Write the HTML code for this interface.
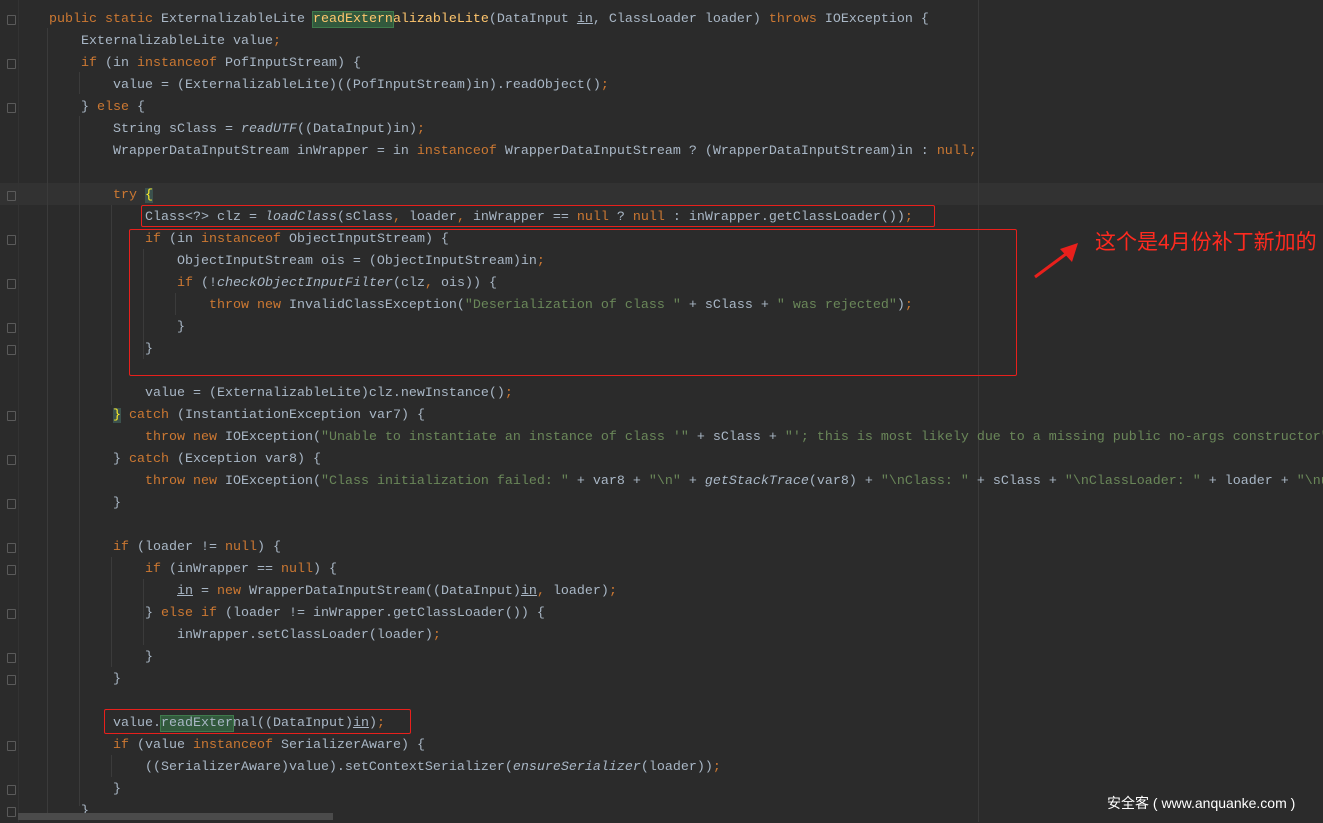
<!DOCTYPE html>
<html><head><meta charset="utf-8"><style>
body{margin:0;width:1323px;height:822px;background:#2b2b2b;overflow:hidden;position:relative;font-family:"Liberation Mono",monospace}
pre{position:absolute;left:49px;top:9px;margin:0;font:13.33px/22px "Liberation Mono",monospace;color:#a9b7c6;white-space:pre}
.k{color:#cc7832}.s{color:#6a8759}.i{font-style:italic}.m{color:#ffc66d}.u{text-decoration:underline}
.hl{background:#32593d;outline:1px solid #3f7a4c}
.cur{position:absolute;left:0;top:183px;width:1323px;height:22px;background:#323232}
.g{position:absolute;width:1px;background:#3b3b3b}
.box{position:absolute;border:1px solid #e8201c;border-radius:2px}
.f{position:absolute;left:7px;width:7px;height:8px;border:1px solid #5a5a5a;border-radius:1px}
</style></head><body>
<div class="cur"></div>
<div class="g" style="left:18px;top:0;height:822px;background:#333"></div>
<div class="g" style="left:47px;top:28px;height:790px"></div>
<div class="g" style="left:79px;top:116px;height:690px"></div>
<div class="g" style="left:111px;top:205px;height:200px"></div>
<div class="g" style="left:143px;top:249px;height:110px"></div>
<div class="g" style="left:175px;top:293px;height:22px"></div>
<div class="g" style="left:79px;top:72px;height:22px"></div>
<div class="g" style="left:111px;top:557px;height:110px"></div>
<div class="g" style="left:143px;top:579px;height:66px"></div>
<div class="g" style="left:111px;top:755px;height:22px"></div>
<div class="g" style="left:978px;top:0;height:822px;background:#3a3a3a"></div>
<div class="f" style="top:15px"></div><div class="f" style="top:59px"></div><div class="f" style="top:103px"></div>
<div class="f" style="top:191px"></div><div class="f" style="top:235px"></div><div class="f" style="top:279px"></div>
<div class="f" style="top:323px"></div><div class="f" style="top:345px"></div><div class="f" style="top:411px"></div>
<div class="f" style="top:455px"></div><div class="f" style="top:499px"></div><div class="f" style="top:543px"></div>
<div class="f" style="top:565px"></div><div class="f" style="top:609px"></div><div class="f" style="top:653px"></div>
<div class="f" style="top:675px"></div><div class="f" style="top:741px"></div><div class="f" style="top:785px"></div>
<div class="f" style="top:807px"></div>
<pre><span class="k">public static </span>ExternalizableLite <span class="m"><span class="hl">readExtern</span>alizableLite</span>(DataInput <span class="u">in</span>, ClassLoader loader) <span class="k">throws </span>IOException {
    ExternalizableLite value<span class="k">;</span>
    <span class="k">if </span>(in <span class="k">instanceof </span>PofInputStream) {
        value = (ExternalizableLite)((PofInputStream)in).readObject()<span class="k">;</span>
    } <span class="k">else </span>{
        String sClass = <span class="i">readUTF</span>((DataInput)in)<span class="k">;</span>
        WrapperDataInputStream inWrapper = in <span class="k">instanceof </span>WrapperDataInputStream ? (WrapperDataInputStream)in : <span class="k">null;</span>

        <span class="k">try </span><span style="color:#ffef28;background:#3b514d">{</span>
            Class&lt;?&gt; clz = <span class="i">loadClass</span>(sClass<span class="k">, </span>loader<span class="k">, </span>inWrapper == <span class="k">null </span>? <span class="k">null </span>: inWrapper.getClassLoader())<span class="k">;</span>
            <span class="k">if </span>(in <span class="k">instanceof </span>ObjectInputStream) {
                ObjectInputStream ois = (ObjectInputStream)in<span class="k">;</span>
                <span class="k">if </span>(!<span class="i">checkObjectInputFilter</span>(clz<span class="k">, </span>ois)) {
                    <span class="k">throw new </span>InvalidClassException(<span class="s">"Deserialization of class "</span> + sClass + <span class="s">" was rejected"</span>)<span class="k">;</span>
                }
            }

            value = (ExternalizableLite)clz.newInstance()<span class="k">;</span>
        <span style="color:#ffef28;background:#3b514d">}</span> <span class="k">catch </span>(InstantiationException var7) {
            <span class="k">throw new </span>IOException(<span class="s">"Unable to instantiate an instance of class '"</span> + sClass + <span class="s">"'; this is most likely due to a missing public no-args constructor"</span>
        } <span class="k">catch </span>(Exception var8) {
            <span class="k">throw new </span>IOException(<span class="s">"Class initialization failed: "</span> + var8 + <span class="s">"\n"</span> + <span class="i">getStackTrace</span>(var8) + <span class="s">"\nClass: "</span> + sClass + <span class="s">"\nClassLoader: "</span> + loader + <span class="s">"\nu</span>
        }

        <span class="k">if </span>(loader != <span class="k">null</span>) {
            <span class="k">if </span>(inWrapper == <span class="k">null</span>) {
                <span class="u">in</span> = <span class="k">new </span>WrapperDataInputStream((DataInput)<span class="u">in</span><span class="k">, </span>loader)<span class="k">;</span>
            } <span class="k">else if </span>(loader != inWrapper.getClassLoader()) {
                inWrapper.setClassLoader(loader)<span class="k">;</span>
            }
        }

        value.<span class="hl">readExter</span>nal((DataInput)<span class="u">in</span>)<span class="k">;</span>
        <span class="k">if </span>(value <span class="k">instanceof </span>SerializerAware) {
            ((SerializerAware)value).setContextSerializer(<span class="i">ensureSerializer</span>(loader))<span class="k">;</span>
        }
    }</pre>
<div class="box" style="left:141px;top:205px;width:792px;height:20px"></div>
<div class="box" style="left:129px;top:229px;width:886px;height:145px"></div>
<div class="box" style="left:104px;top:709px;width:305px;height:23px"></div>
<svg style="position:absolute;left:1030px;top:238px" width="55" height="45"><line x1="5" y1="39" x2="40" y2="13" stroke="#e8201c" stroke-width="3"/><polygon points="48,5 30,11 42,24" fill="#e8201c"/></svg>
<div style="position:absolute;left:1095px;top:226px;color:#ff2a1f;font:21px 'Liberation Sans','Noto Sans CJK SC',sans-serif;white-space:nowrap">这个是4月份补丁新加的</div>
<div style="position:absolute;left:18px;top:813px;width:315px;height:7px;background:#4b4b4b"></div>
<div style="position:absolute;left:1107px;top:793px;color:#fff;font:14px 'Liberation Sans','Noto Sans CJK SC',sans-serif;white-space:nowrap">安全客 ( www.anquanke.com )</div>
</body></html>
